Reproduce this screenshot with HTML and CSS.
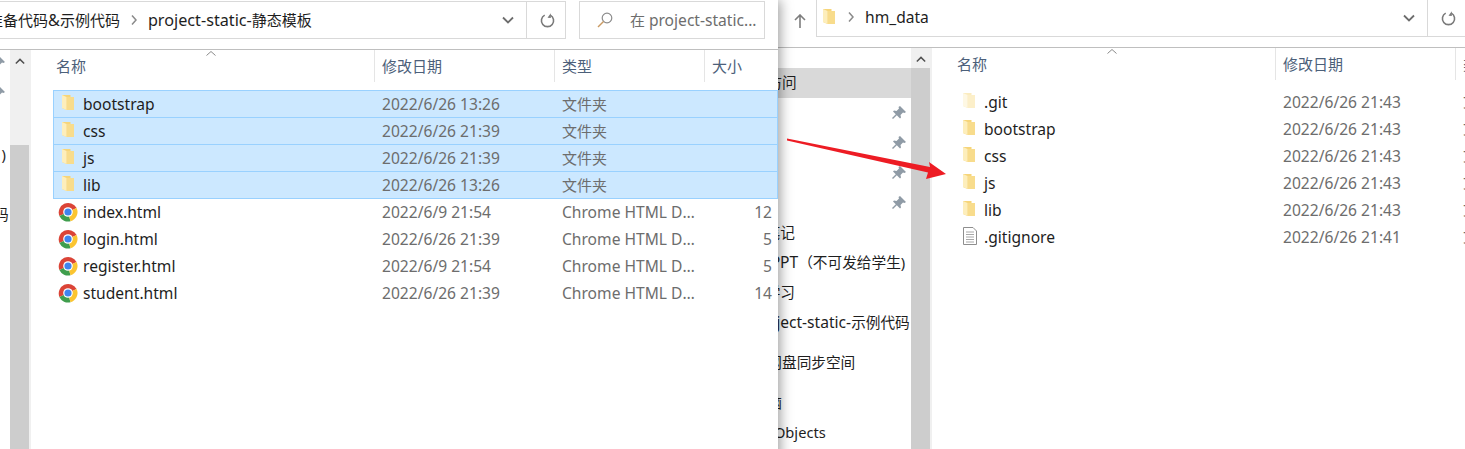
FILE: index.html
```html
<!DOCTYPE html>
<html lang="zh">
<head>
  <meta charset="UTF-8">
  <title>project-static-静态模板</title>
  <link rel="stylesheet" href="styles.css">
</head>
<body>
  <svg class="defs" width="0" height="0">
    <symbol id="folder" viewBox="0 0 16 18">
      <path d="M1 1h8.500v2H13v13H5.500L1 14z" fill="#f6d57a"/>
      <path d="M5.500 3H13v13H5.500z" fill="#f8dc8c"/>
      <path d="M1 1l4.500 2v13L1 14z" fill="#fdeebc"/>
    </symbol>
    <symbol id="folder-pale" viewBox="0 0 16 18">
      <path d="M1 1h8.500v2H13v13H5.500L1 14z" fill="#fbecc0"/>
      <path d="M5.500 3H13v13H5.500z" fill="#fcefc9"/>
      <path d="M1 1l4.500 2v13L1 14z" fill="#fef8e4"/>
    </symbol>
    <symbol id="chrome" viewBox="0 0 20 20">
      <path d="M10 10L18.600 6A9.500 9.500 0 0 0 1.400 14z" fill="#db4437"/>
      <path d="M10 10L1.400 14A9.500 9.500 0 0 0 12.500 19.200z" fill="#3f9e4d"/>
      <path d="M10 10L12.500 19.200A9.500 9.500 0 0 0 18.600 6z" fill="#fbc531"/>
      <circle cx="10" cy="10" r="4.800" fill="#fff"/>
      <circle cx="10" cy="10" r="3.600" fill="#3f84ee"/>
    </symbol>
    <symbol id="doc" viewBox="0 0 16 18">
      <path d="M1.500 .5h9.500l3.500 3.500v13.500h-13z" fill="#fff" stroke="#8e8e8e"/>
      <path d="M4 5h8M4 7.500h8M4 10h8M4 12.500h8M4 15h8" stroke="#a8a8a8"/>
    </symbol>
    <symbol id="pin" viewBox="0 0 14 14">
      <path d="M8 0l6 6-1.500 1L11 6.500 8.500 9 9 11.500 8 12.500 4.800 9.200 1 13l-1-1 3.800-3.800L1 5.500l1-1 2.500.5L7 2.500 6.500 1z" fill="#8f9ba6"/>
    </symbol>
    <symbol id="chev-down" viewBox="0 0 12 8">
      <path d="M1 1.500l5 5 5-5" fill="none" stroke="#6d6d6d" stroke-width="1.800"/>
    </symbol>
    <symbol id="chev-right" viewBox="0 0 6 10">
      <path d="M1 .5l4 4.500-4 4.500" fill="none" stroke="#8a8a8a" stroke-width="1.500"/>
    </symbol>
    <symbol id="chev-up" viewBox="0 0 12 8">
      <path d="M1 6.500l5-5 5 5" fill="none" stroke="#505050" stroke-width="1.800"/>
    </symbol>
    <symbol id="sort-up" viewBox="0 0 10 5">
      <path d="M.5 4.500L5 .5l4.500 4" fill="none" stroke="#8a8a8a"/>
    </symbol>
    <symbol id="refresh" viewBox="0 0 16 16">
      <path d="M11 2.300A6.500 6.500 0 1 1 5 2.300" fill="none" stroke="#7a7a7a" stroke-width="1.700"/>
      <path d="M11.500 .2v5l-3.500-.2z" fill="#7a7a7a"/>
    </symbol>
    <symbol id="search" viewBox="0 0 16 16">
      <circle cx="10" cy="6" r="4.800" fill="none" stroke="#8c8c8c" stroke-width="1.200"/>
      <path d="M6.500 9.500L1 15" stroke="#c99a63" stroke-width="1.400"/>
    </symbol>
    <symbol id="up-arrow" viewBox="0 0 12 14">
      <path d="M6 1v13M1 6l5-5 5 5" fill="none" stroke="#7d7d7d" stroke-width="1.600"/>
    </symbol>
  </svg>

  <div class="desktop">
    <!-- back window -->
    <section class="window window-back">
      <header class="toolbar">
        <svg class="up-btn"><use href="#up-arrow"/></svg>
        <div class="address">
          <div class="crumbs">
            <svg class="folder-small"><use href="#folder"/></svg>
            <svg class="chev-right"><use href="#chev-right"/></svg>
            <span class="lat">hm_data</span>
          </div>
          <svg class="chev-down"><use href="#chev-down"/></svg>
          <div class="refresh-btn"><svg class="refresh"><use href="#refresh"/></svg></div>
        </div>
      </header>
      <div class="panes">
        <nav class="nav nav-back">
          <div class="nav-row is-active lvl-0">快速访问</div>
          <div class="nav-row lvl-1"><svg class="pin"><use href="#pin"/></svg></div>
          <div class="nav-row lvl-1"><svg class="pin"><use href="#pin"/></svg></div>
          <div class="nav-row lvl-1"><svg class="pin"><use href="#pin"/></svg></div>
          <div class="nav-row lvl-1"><svg class="pin"><use href="#pin"/></svg></div>
          <div class="nav-row lvl-1">的笔记</div>
          <div class="nav-row lvl-1"><span class="lat">课&nbsp;PPT</span>（不可发给学生)</div>
          <div class="nav-row lvl-1">的学习</div>
          <div class="nav-row lvl-1"><span class="lat">project-static-</span>示例代码</div>
          <div class="nav-row lvl-0 group-start">百度网盘同步空间</div>
          <div class="nav-row lvl-0 group-start">此电脑</div>
          <div class="nav-row lvl-1">3D Objects</div>
        </nav>
        <div class="scrollbar scrollbar-back">
          <div class="scroll-track"><svg class="chev-up"><use href="#chev-up"/></svg></div>
          <div class="scroll-thumb"></div>
        </div>
        <main class="files">
          <div class="file-head">
            <div class="col-name">名称<svg class="sort-up"><use href="#sort-up"/></svg></div>
            <div class="col-sep">修改日期</div>
            <div class="col-sep">类型</div>
            <div class="col-sep"></div>
          </div>
          <div class="file-rows">
            <div class="file-row"><svg class="file-icon"><use href="#folder-pale"/></svg><span class="file-name">.git</span><span class="cell lat">2022/6/26 21:43</span><span class="cell cell-cn">文件夹</span><span></span></div>
            <div class="file-row"><svg class="file-icon"><use href="#folder"/></svg><span class="file-name">bootstrap</span><span class="cell lat">2022/6/26 21:43</span><span class="cell cell-cn">文件夹</span><span></span></div>
            <div class="file-row"><svg class="file-icon"><use href="#folder"/></svg><span class="file-name">css</span><span class="cell lat">2022/6/26 21:43</span><span class="cell cell-cn">文件夹</span><span></span></div>
            <div class="file-row"><svg class="file-icon"><use href="#folder"/></svg><span class="file-name">js</span><span class="cell lat">2022/6/26 21:43</span><span class="cell cell-cn">文件夹</span><span></span></div>
            <div class="file-row"><svg class="file-icon"><use href="#folder"/></svg><span class="file-name">lib</span><span class="cell lat">2022/6/26 21:43</span><span class="cell cell-cn">文件夹</span><span></span></div>
            <div class="file-row"><svg class="file-icon"><use href="#doc"/></svg><span class="file-name">.gitignore</span><span class="cell lat">2022/6/26 21:41</span><span class="cell cell-cn">文本文档</span><span></span></div>
          </div>
        </main>
      </div>
    </section>

    <!-- front window -->
    <section class="window window-front">
      <header class="toolbar">
        <div class="address">
          <div class="crumbs">
            <span>准备代码<span class="lat">&amp;</span>示例代码</span>
            <svg class="chev-right"><use href="#chev-right"/></svg>
            <span><span class="lat">project-static-</span>静态模板</span>
          </div>
          <svg class="chev-down"><use href="#chev-down"/></svg>
          <div class="refresh-btn"><svg class="refresh"><use href="#refresh"/></svg></div>
        </div>
        <div class="search">
          <svg class="search-icon"><use href="#search"/></svg>
          <span>在 <span class="lat">project-static...</span></span>
        </div>
      </header>
      <div class="panes">
        <nav class="nav nav-front">
          <div class="nav-row"><svg class="pin"><use href="#pin"/></svg></div>
          <div class="nav-row"><svg class="pin"><use href="#pin"/></svg></div>
          <div class="nav-row"></div>
          <div class="nav-row">不可发&nbsp;&nbsp;)</div>
          <div class="nav-row"></div>
          <div class="nav-row">示例代码</div>
        </nav>
        <div class="scrollbar scrollbar-front">
          <div class="scroll-track"><svg class="chev-up"><use href="#chev-up"/></svg></div>
          <div class="scroll-thumb"></div>
        </div>
        <main class="files">
          <div class="file-head">
            <div class="col-name">名称<svg class="sort-up"><use href="#sort-up"/></svg></div>
            <div class="col-sep">修改日期</div>
            <div class="col-sep">类型</div>
            <div class="col-sep">大小</div>
          </div>
          <div class="file-rows">
            <div class="file-row is-selected"><svg class="file-icon"><use href="#folder"/></svg><span class="file-name">bootstrap</span><span class="cell lat">2022/6/26 13:26</span><span class="cell cell-cn">文件夹</span><span></span></div>
            <div class="file-row is-selected"><svg class="file-icon"><use href="#folder"/></svg><span class="file-name">css</span><span class="cell lat">2022/6/26 21:39</span><span class="cell cell-cn">文件夹</span><span></span></div>
            <div class="file-row is-selected"><svg class="file-icon"><use href="#folder"/></svg><span class="file-name">js</span><span class="cell lat">2022/6/26 21:39</span><span class="cell cell-cn">文件夹</span><span></span></div>
            <div class="file-row is-selected"><svg class="file-icon"><use href="#folder"/></svg><span class="file-name">lib</span><span class="cell lat">2022/6/26 13:26</span><span class="cell cell-cn">文件夹</span><span></span></div>
            <div class="file-row"><svg class="file-icon chrome-icon"><use href="#chrome"/></svg><span class="file-name">index.html</span><span class="cell lat">2022/6/9 21:54</span><span class="cell lat">Chrome HTML Document</span><span class="cell-size lat">12</span></div>
            <div class="file-row"><svg class="file-icon chrome-icon"><use href="#chrome"/></svg><span class="file-name">login.html</span><span class="cell lat">2022/6/26 21:39</span><span class="cell lat">Chrome HTML Document</span><span class="cell-size lat">5</span></div>
            <div class="file-row"><svg class="file-icon chrome-icon"><use href="#chrome"/></svg><span class="file-name">register.html</span><span class="cell lat">2022/6/9 21:54</span><span class="cell lat">Chrome HTML Document</span><span class="cell-size lat">5</span></div>
            <div class="file-row"><svg class="file-icon chrome-icon"><use href="#chrome"/></svg><span class="file-name">student.html</span><span class="cell lat">2022/6/26 21:39</span><span class="cell lat">Chrome HTML Document</span><span class="cell-size lat">14</span></div>
          </div>
        </main>
      </div>
    </section>

    <svg class="arrow" width="170" height="50" viewBox="785 135 170 50">
      <path d="M787 138.500L930 167l-1-5 17 12-20 5 2-6.500L787 140.500z" fill="#ed1c24"/>
    </svg>
  </div>
</body>
</html>
```

FILE: styles.css
```css
* {
  box-sizing: border-box;
}
html, body {
  margin: 0;
  height: 100%;
}
body {
  font-family: "Noto Sans", "Noto Sans CJK SC", sans-serif;
  font-size: 15px;
  color: #1e1e1e;
  background: #fff;
  overflow: hidden;
}
svg {
  display: block;
  flex: none;
}
.defs {
  position: absolute;
}
/* latin text runs wider than the cjk around it */
.lat {
  font-size: 15.6px;
}
.desktop {
  position: relative;
  width: 1465px;
  height: 449px;
  overflow: hidden;
}

/* windows sit on a free canvas, the front one covers the back one */
.window {
  position: absolute;
  display: flex;
  flex-direction: column;
  height: 480px;
  background: #fff;
}
.window-front {
  left: -150px;
  top: 0;
  width: 928px;
  box-shadow: 2px 0 12px rgba(0, 0, 0, 0.4);
}
.window-back {
  left: 640px;
  top: -2px;
  width: 1000px;
}

/* toolbar */
.toolbar {
  display: flex;
  align-items: flex-start;
  height: 50px;
  padding-top: 1px;
  border-bottom: 1px solid #bfbfbf;
  flex: none;
}
.window-front .toolbar {
  padding-left: 20px;
  padding-right: 13px;
  gap: 13px;
}
.window-back .toolbar {
  padding-left: 154px;
}
.up-btn {
  width: 12px;
  height: 14px;
  margin-top: 15px;
  margin-right: 10px;
}
.address {
  display: flex;
  align-items: center;
  height: 38px;
  border: 1px solid #d9d9d9;
  flex: 1;
}
.window-front .address {
  padding-left: 117px;
}
.window-back .address {
  padding-left: 5px;
  flex: none;
  width: 651px;
}
.crumbs {
  display: flex;
  align-items: center;
  gap: 11px;
  flex: 1;
  white-space: nowrap;
  padding-bottom: 1px;
}
.window-front .crumbs .lat {
  font-size: 16.2px;
}
.window-back .crumbs {
  padding-bottom: 3px;
}
.folder-small {
  width: 16px;
  height: 18px;
  margin-right: -1px;
}
.chev-right {
  width: 6px;
  height: 10px;
}
.chev-down {
  width: 12px;
  height: 8px;
  margin-right: 12px;
}
.refresh-btn {
  display: flex;
  align-items: center;
  justify-content: center;
  width: 39px;
  height: 36px;
  padding-left: 3px;
  border-left: 1px solid #d9d9d9;
}
.refresh {
  width: 15px;
  height: 15px;
}
.search {
  display: flex;
  align-items: center;
  width: 186px;
  height: 38px;
  padding-left: 17px;
  gap: 17px;
  border: 1px solid #d9d9d9;
  color: #6d6d6d;
  white-space: nowrap;
}
.search-icon {
  width: 16px;
  height: 16px;
}

/* nav + scrollbar + list */
.panes {
  display: flex;
  flex: 1;
  min-height: 0;
}
.nav {
  flex: none;
  overflow: hidden;
  white-space: nowrap;
  font-size: 14.67px;
}
.nav-front {
  width: 160px;
  margin-top: -2px;
  padding-left: 100px;
}
.nav-back {
  width: 271px;
  padding-top: 20px;
}
.nav-row {
  display: flex;
  align-items: center;
  height: 30px;
}
.nav-back .nav-row {
  padding-bottom: 3px;
}
.lvl-0 {
  padding-left: 98px;
}
.lvl-1 {
  padding-left: 111px;
}
.is-active {
  background: #d9d9d9;
}
.group-start {
  margin-top: 10px;
}
.pin {
  width: 14px;
  height: 14px;
  margin-left: auto;
  margin-right: 5px;
}
.nav-back .pin {
  margin-bottom: -3px;
}
.scrollbar {
  display: flex;
  flex-direction: column;
  width: 19px;
  flex: none;
  margin-right: 3px;
  box-shadow: 2px 0 0 #f0f0f0;
}
.scroll-track {
  display: flex;
  justify-content: center;
  padding-top: 8px;
  background: #f0f0f0;
  flex: none;
}
.scrollbar-front .scroll-track {
  height: 95px;
}
.scrollbar-back .scroll-track {
  height: 20px;
}
.chev-up {
  width: 10px;
  height: 7px;
}
.scroll-thumb {
  flex: 1;
  background: #cdcdcd;
}

/* file list */
.files {
  flex: 1;
  min-width: 0;
}
.file-head,
.file-row {
  display: grid;
  grid-template-columns: 321px 180px 150px 72px;
  margin-left: 21px;
}
.file-head {
  position: relative;
  height: 32px;
  color: #4c607a;
  margin-bottom: 8px;
}
.col-name {
  padding: 5px 3px 0;
}
.col-sep {
  padding: 5px 0 0 7px;
  border-left: 1px solid #e5e5e5;
  white-space: nowrap;
}
.sort-up {
  position: absolute;
  left: 153px;
  top: 1px;
  width: 10px;
  height: 5px;
}
.file-rows {
  display: flex;
  flex-direction: column;
}
.file-row {
  position: relative;
  align-items: center;
  height: 27px;
  border: 1px solid transparent;
}
.is-selected {
  background: #cce8ff;
  border-color: #99d1ff;
  height: 28px;
  margin-bottom: -1px;
}
.file-icon {
  position: absolute;
  left: 7px;
  top: 3px;
  width: 16px;
  height: 18px;
}
.chrome-icon {
  left: 4px;
  top: 3px;
  width: 20px;
  height: 20px;
}
.file-name {
  padding-left: 29px;
  white-space: nowrap;
  font-size: 15.6px;
}
.cell {
  padding-left: 7px;
  padding-right: 8px;
  color: #6d6d6d;
  white-space: nowrap;
  overflow: hidden;
  text-overflow: ellipsis;
}
.cell-cn {
  padding-bottom: 2px;
}
.cell-size {
  text-align: right;
  padding-right: 5px;
  color: #6d6d6d;
}
.arrow {
  position: absolute;
  left: 785px;
  top: 135px;
}
```
